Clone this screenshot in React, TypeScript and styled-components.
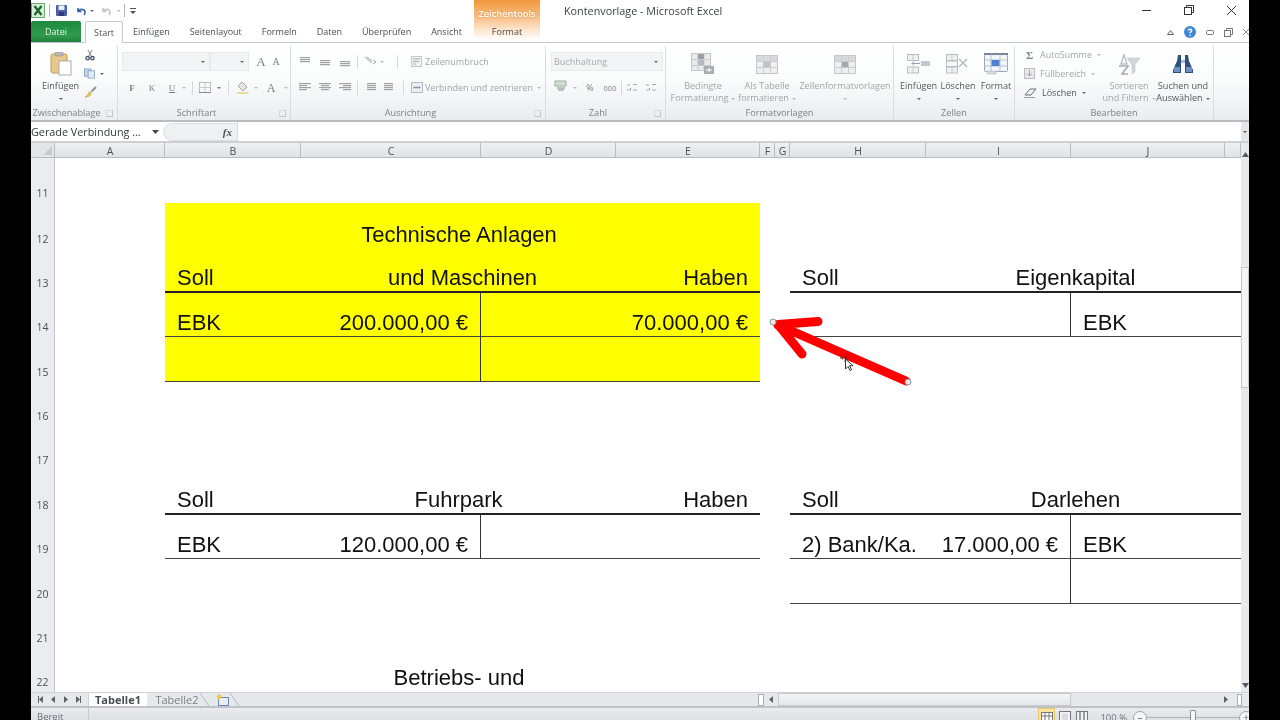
import React from "react";
import styled, { createGlobalStyle } from "styled-components";

const Global = createGlobalStyle`
  html, body { margin: 0; padding: 0; background: #000; overflow: hidden; }
  * { box-sizing: border-box; }
`;

const Screen = styled.div`
  width: 1280px; height: 720px; background: #000; display: flex; justify-content: center; overflow: hidden;
  font-family: "Open Sans", "Liberation Sans", sans-serif;
  filter: blur(0.45px);
`;
const Win = styled.div`
  width: 1218px; height: 720px; background: #fff; display: flex; flex-direction: column; overflow: hidden;
`;

/* ---------- top ---------- */
const Top = styled.div`display: flex; height: 43px; flex: none; border-bottom: 1px solid #c6c9ce;`;
const TopLeft = styled.div`width: 443px; flex: none; display: flex; flex-direction: column;`;
const Qat = styled.div`height: 20px; display: flex; align-items: center; padding-top: 1px;`;
const QatItem = styled.span<{ $ml: number }>`display: flex; align-items: center; margin-left: ${(p) => p.$ml}px;`;
const QatSep = styled.span<{ $ml: number }>`width: 1px; height: 13px; background: #aeb4bb; margin-left: ${(p) => p.$ml}px;`;
const Caret = styled.span<{ $c?: string; $ml?: number }>`
  display: inline-block; width: 0; height: 0; flex: none;
  margin-left: ${(p) => p.$ml ?? 0}px;
  border-left: 2px solid transparent; border-right: 2px solid transparent;
  border-top: 2px solid ${(p) => p.$c || "#666"};
`;
const TabRow = styled.div`height: 22px; display: flex; align-items: flex-end;`;
const FileTab = styled.div`
  width: 50px; flex: none; height: 21px; margin-right: 4px; border-radius: 2px 2px 0 0;
  background: linear-gradient(#1d8a3d, #2f9a4c 70%, #1f7f3a); color: #e6f3ea;
  font-size: 9px; display: flex; align-items: center; justify-content: center;
`;
const Tab = styled.div<{ $active?: boolean }>`
  flex: none; height: ${(p) => (p.$active ? "22px" : "21px")};
  padding: 0 ${(p) => (p.$active ? "8px" : "0")};
  margin-right: ${(p) => (p.$active ? "10px" : "20px")};
  color: #4a4f55; font-size: 9px; display: flex; align-items: center; white-space: nowrap;
  background: #fff; position: relative; top: ${(p) => (p.$active ? "1px" : "0")};
  ${(p) => p.$active && "border: 1px solid #c6c9ce; border-bottom: none; border-radius: 2px 2px 0 0;"}
`;
const Context = styled.div`
  width: 66px; flex: none; height: 40px; display: flex; flex-direction: column; align-items: center;
  background: linear-gradient(#f29a3e 0, #f7bd83 40%, #fde6cf 75%, #fff 100%);
  border-top: 1px solid #ea9a3c;
`;
const ContextTitle = styled.div`height: 24px; display: flex; align-items: center; color: #fff; font-size: 9.3px; font-weight: 600; text-shadow: 0 0 2px #d98a3a;`;
const ContextTab = styled.div`font-size: 9px; color: #4a4f55;`;
const TopRight = styled.div`flex: 1; display: flex; flex-direction: column;`;
const TitleRow = styled.div`height: 20px; display: flex; justify-content: space-between; align-items: center; padding: 0 12px 0 24px;`;
const Title = styled.div`font-size: 10.8px; color: #3c3f44; white-space: nowrap;`;
const WinButtons = styled.div`display: flex; align-items: center; gap: 32px;`;
const HelpRow = styled.div`height: 22px; display: flex; justify-content: flex-end; align-items: center; gap: 10px; padding-right: 0; padding-top: 2px;`;

/* ---------- ribbon ---------- */
const Ribbon = styled.div`
  height: 79px; flex: none; display: flex; padding-right: 35px;
  background: linear-gradient(#fff 0, #fbfcfc 45%, #e9edf0 100%);
  border-bottom: 2px solid #b9bdc2;
`;
const Group = styled.div<{ $w: number }>`
  width: ${(p) => p.$w}px; flex: none; display: flex; flex-direction: column; position: relative;
  border-right: 1px solid #d9dde1; margin-top: 3px;
`;
const GroupBody = styled.div<{ $pad?: string }>`flex: 1; display: flex; padding: ${(p) => p.$pad || "0"}; min-height: 0;`;
const GroupLabel = styled.div<{ $launcher?: boolean }>`
  height: 15px; flex: none; text-align: center; font-size: 9.2px; color: #7c8288; line-height: 15px; white-space: nowrap;
  padding-right: ${(p) => (p.$launcher ? 15 : 0)}px;
`;
const Launcher = styled.span`
  position: absolute; right: 4px; bottom: 3px; width: 7px; height: 7px;
  border: 1px solid #c3c7cc; border-top-color: #d8dbdf; border-left-color: #d8dbdf;
`;
const Stack = styled.div<{ $gap?: number; $w?: number; $mt?: number }>`
  display: flex; flex-direction: column; gap: ${(p) => p.$gap ?? 0}px;
  margin-top: ${(p) => p.$mt ?? 0}px;
  ${(p) => p.$w && `width: ${p.$w}px;`}
`;
const Line = styled.div<{ $h?: number; $gap?: number }>`
  display: flex; align-items: center; height: ${(p) => p.$h ?? 19}px; gap: ${(p) => p.$gap ?? 0}px;
`;
const Combo = styled.div<{ $w: number }>`
  width: ${(p) => p.$w}px; height: 19px; background: #f2f4f5; border: 1px solid #e7e9eb;
  display: flex; align-items: center; justify-content: flex-end; padding-right: 4px;
  font-size: 9px; color: #a7abb0;
`;
const ComboText = styled.span`flex: 1; padding-left: 2px; white-space: nowrap;`;
const Glyph = styled.span<{ $w: number; $size?: number; $serif?: boolean; $bold?: boolean; $ul?: boolean; $ml?: number }>`
  width: ${(p) => p.$w}px; text-align: center; flex: none; color: #7d8186;
  margin-left: ${(p) => p.$ml ?? 0}px;
  font-size: ${(p) => p.$size ?? 9}px; line-height: 12px;
  font-family: ${(p) => (p.$serif ? '"Liberation Serif", serif' : 'inherit')};
  font-weight: ${(p) => (p.$bold ? 700 : 400)};
  ${(p) => p.$ul && "text-decoration: underline;"}
`;
const Sep = styled.span<{ $m?: number }>`width: 1px; height: 14px; background: #d6d9dc; flex: none; margin: 0 ${(p) => p.$m ?? 3}px;`;
const MutedText = styled.span<{ $dark?: boolean; $ml?: number }>`
  font-size: 9px; white-space: nowrap; color: ${(p) => (p.$dark ? "#54585e" : "#a2a6ab")};
  margin-left: ${(p) => p.$ml ?? 0}px;
`;
const BigBtn = styled.div<{ $w: number; $dark?: boolean }>`
  width: ${(p) => p.$w}px; flex: none; display: flex; flex-direction: column; align-items: center;
  color: ${(p) => (p.$dark ? "#54585e" : "#a2a6ab")}; font-size: 9.1px; line-height: 12.5px; text-align: center; white-space: nowrap;
`;
const BigIcon = styled.div`height: 30px; display: flex; align-items: center; justify-content: center; margin-bottom: 1px;`;
const CaretLine = styled.div`height: 12px; display: flex; align-items: center; justify-content: center; gap: 3px;`;

/* ---------- formula ---------- */
const Formula = styled.div`
  height: 21px; flex: none; display: flex; align-items: stretch; background: #fff;
  border-bottom: 2px solid #ccd0d4;
`;
const NameBox = styled.div`
  width: 130px; flex: none; display: flex; align-items: center; justify-content: space-between; padding-right: 2px;
  font-size: 10.8px; color: #33373b; white-space: nowrap;
`;
const FxBox = styled.div`
  width: 74px; flex: none; margin: 1px 0 0 2px; display: flex; align-items: center; justify-content: flex-end;
  padding-right: 5px; background: #eef0f2; border-radius: 9px 0 0 9px; border: 1px solid #dcdfe3; border-right: none;
`;
const Fx = styled.span`font-family: "Liberation Serif", serif; font-style: italic; font-weight: 700; font-size: 11px; color: #4d5156;`;
const FormulaInput = styled.div`flex: 1; border-left: 1px solid #d9dce0;`;
const FormulaEnd = styled.div`width: 8px; background: #e4e7ea; display: flex; justify-content: center; align-items: center;`;

/* ---------- sheet ---------- */
const SheetWrap = styled.div`flex: 1; display: flex; min-height: 0;`;
const Sheet = styled.div`
  width: 1210px; flex: none; display: grid; position: relative; overflow: hidden;
  grid-template-columns: 24px 110px 136px 180px 135px 144px 15px 15px 136px 145px 154px 16px;
  grid-template-rows: 15px 45px 45.5px repeat(10, 44.4px);
  font-family: "Liberation Sans", Arial, sans-serif;
`;
const Corner = styled.div`
  grid-column: 1; grid-row: 1; background: #e3e6e9; border-right: 1px solid #b9bdc3; border-bottom: 1px solid #b9bdc3;
  display: flex; align-items: flex-end; justify-content: flex-end; padding: 0 2px 2px 0;
`;
const ColHead = styled.div<{ $c: number }>`
  grid-column: ${(p) => p.$c}; grid-row: 1;
  background: linear-gradient(#eef0f2, #dfe3e7); border-right: 1px solid #b9bdc3; border-bottom: 1px solid #b9bdc3;
  font-size: 10.5px; color: #4c5056; display: flex; align-items: center; justify-content: center;
  font-family: "Open Sans", sans-serif; padding: 1px 0 0 1px;
`;
const RowHead = styled.div<{ $r: number }>`
  grid-column: 1; grid-row: ${(p) => p.$r};
  background: #eaecef; border-right: 1px solid #c2c6cb;
  font-size: 10.5px; color: #4c5056; display: flex; align-items: flex-end; justify-content: center; padding-bottom: 3px;
  font-family: "Open Sans", sans-serif;
`;
const Cell = styled.div<{
  $c: number; $r: number; $span?: number; $y?: boolean;
  $align?: "left" | "right" | "center"; $b?: 0 | 1 | 2; $div?: boolean; $shift?: number; $lead?: number;
}>`
  grid-column: ${(p) => p.$c} / span ${(p) => p.$span ?? 1};
  grid-row: ${(p) => p.$r};
  background: ${(p) => (p.$y ? "#ffff00" : "transparent")};
  display: flex; align-items: flex-end; white-space: nowrap;
  justify-content: ${(p) => (p.$align === "right" ? "flex-end" : p.$align === "center" ? "center" : "flex-start")};
  padding: 0 ${(p) => 12 + (p.$shift ?? 0)}px 0 ${(p) => 12 + (p.$lead ?? 0)}px;
  font-size: 22px; line-height: 24px; color: #111;
  padding-bottom: ${(p) => (p.$b ? 1 : 2)}px;
  border-bottom: ${(p) => (p.$b === 2 ? "2px solid #222" : p.$b === 1 ? "1px solid #444" : "none")};
  border-right: ${(p) => (p.$div ? "1px solid #333" : "none")};
`;
const Overlay = styled.svg`position: absolute; left: 0; top: 0; width: 1210px; height: 549px; pointer-events: none;`;
const VScroll = styled.div`
  width: 8px; flex: none; background: #e7eaed; display: flex; flex-direction: column; align-items: center; justify-content: space-between;
  position: relative; padding: 9px 0 4px;
`;
const VThumb = styled.div`position: absolute; left: 0; top: 124px; width: 8px; height: 121px; background: #f3f5f6; border: 1px solid #c6cace;`;

/* ---------- bottom ---------- */
const TabBar = styled.div`
  height: 16px; flex: none; display: flex; align-items: stretch; background: #e6e9ec;
  border-top: 1px solid #cfd2d6; border-bottom: 2px solid #bfc3c8;
`;
const NavBox = styled.div`width: 58px; flex: none; display: flex; align-items: center; justify-content: space-around; padding: 0 4px; border-right: 1px solid #cdd1d5;`;
const SheetTab = styled.div<{ $active?: boolean; $w: number; $slant?: boolean }>`
  width: ${(p) => p.$w}px; flex: none; display: flex; align-items: center; justify-content: center; position: relative;
  font-size: 11px; color: ${(p) => (p.$active ? "#4a4d52" : "#7b8086")}; font-weight: ${(p) => (p.$active ? 700 : 400)};
  background: ${(p) => (p.$active ? "#fff" : "transparent")};
  font-family: "Open Sans", sans-serif;
  ${(p) => p.$slant && `
    &::after { content: ""; position: absolute; right: 2px; top: 0; bottom: 0; width: 1px; background: #b3b7bc; transform: skewX(35deg); }
  `}
`;
const TabSpacer = styled.div`flex: 1; display: flex; align-items: center; justify-content: flex-end;`;
const HScroll = styled.div`width: 492px; height: 100%; display: flex; align-items: center;`;
const Splitter = styled.div`width: 6px; height: 12px; flex: none; background: #fff; border: 1px solid #a9adb2; margin-left: 1px;`;
const HLeft = styled.div`width: 14px; flex: none; display: flex; justify-content: center;`;
const HThumb = styled.div`width: 293px; height: 13px; background: linear-gradient(#f3f5f6, #e4e7ea); border: 1px solid #c6cace; flex: none;`;
const HEnd = styled.div`flex: 1; display: flex; align-items: center; justify-content: flex-end; gap: 8px; padding-right: 7px;`;
const Status = styled.div`
  height: 12px; flex: none; display: flex; align-items: flex-start; justify-content: space-between;
  background: linear-gradient(#e9ebee, #dde0e4); font-size: 9.5px; color: #6b7076; overflow: hidden;
`;
const StatusText = styled.div`width: 58px; padding-left: 6px; border-right: 1px solid #c8cbd0; height: 12px; line-height: 17px;`;
const StatusRight = styled.div`display: flex; align-items: flex-start; height: 12px; margin-right: -4px;`;
const ViewBtn = styled.div<{ $on?: boolean }>`
  width: 17px; height: 12px; flex: none; display: flex; align-items: flex-start; justify-content: center; padding-top: 3px;
  ${(p) => p.$on && "background: #fbe6a5; border: 1px solid #e6c56b; border-bottom: none; margin-right: 1px;"}
`;
const Zoom = styled.span`margin: 1px 6px 0 10px; color: #70757b; font-size: 9.5px; line-height: 17px; white-space: nowrap;`;
const ZoomCircle = styled.span`
  width: 14px; height: 14px; border-radius: 50%; border: 1px solid #9ea3a9; background: #f5f6f7; flex: none; font-size: 10px; line-height: 10px; text-align: center; color: #666; margin-top: 3px;
`;
const SliderTrack = styled.div`width: 92px; height: 1px; background: #b0b4b9; margin-top: 9px; position: relative;`;
const SliderKnob = styled.span`position: absolute; left: 43px; top: -7px; width: 6px; height: 14px; background: #f6f6f6; border: 1px solid #8e9398; border-radius: 1px;`;

/* ---------- icons ---------- */
const ExcelLogo = () => (
  <svg width="14" height="15" viewBox="0 0 14 15"><rect x=".5" y=".5" width="13" height="14" fill="#d8ecd8" stroke="#6fa56f" /><path d="M3.5 3l7 9M10.5 3l-7 9" stroke="#1d6b2c" strokeWidth="2.4" /></svg>
);
const SaveIcon = () => (
  <svg width="11" height="11" viewBox="0 0 11 11"><rect width="11" height="11" rx="1" fill="#4a5fa8" /><rect x="2.5" y=".5" width="6" height="4.5" fill="#e8edf8" /><rect x="3" y="7" width="5" height="4" fill="#2d3c78" /></svg>
);
const UndoIcon = ({ c = "#3a64a8" }: { c?: string }) => (
  <svg width="11" height="10" viewBox="0 0 11 10" fill="none"><path d="M2 2v3.5h3.5" stroke={c} strokeWidth="1.6" /><path d="M2.2 5.2C4 2.6 8 2.6 9 5.5 9.4 6.8 8.8 8 8 9" stroke={c} strokeWidth="1.7" /></svg>
);
const QatMore = () => (
  <svg width="6" height="8" viewBox="0 0 6 8"><rect x="0" y="1" width="6" height="1" fill="#555" /><path d="M0 4h6L3 7z" fill="#555" /></svg>
);
const Paste = () => (
  <svg width="22" height="24" viewBox="0 0 22 24"><rect x="1" y="2" width="16" height="19" rx="2" fill="#e7c98b" stroke="#c29a55" /><rect x="5" y="0" width="8" height="4" rx="1" fill="#b7b7b7" stroke="#8d8d8d" strokeWidth=".6" /><rect x="9" y="9" width="12" height="14" fill="#fff" stroke="#a8adb3" /></svg>
);
const Scissors = () => (
  <svg width="12" height="12" viewBox="0 0 12 12" fill="none"><path d="M4 1l3.4 6.4M8 1L4.6 7.4" stroke="#7d8a96" strokeWidth="1" /><circle cx="3.6" cy="9.2" r="1.7" stroke="#44506a" strokeWidth="1.3" /><circle cx="8.4" cy="9.2" r="1.7" stroke="#44506a" strokeWidth="1.3" /></svg>
);
const CopyIcon = () => (
  <svg width="12" height="11" viewBox="0 0 12 11"><rect x=".5" y=".5" width="7" height="8" fill="#c5d6ec" stroke="#8da6c6" /><rect x="4.5" y="2.5" width="7" height="8" fill="#e4ecf6" stroke="#8da6c6" /></svg>
);
const Brush = () => (
  <svg width="13" height="13" viewBox="0 0 13 13"><path d="M7.5 5.5L12 1" stroke="#8a8f96" strokeWidth="1.8" /><path d="M1 11c2.5.5 5-1 6.6-3.4L5.6 5.3C4.8 7.6 3.2 9.8 1 11z" fill="#e8c65a" stroke="#b99a3d" strokeWidth=".6" /></svg>
);
const Lines = ({ rows }: { rows: [number, number, number][] }) => (
  <svg width="12" height="11" viewBox="0 0 12 11">{rows.map(([x, y, w], i) => <rect key={i} x={x} y={y} width={w} height="1.2" fill="#9ea2a7" />)}</svg>
);
const Borders = () => (
  <svg width="12" height="11" viewBox="0 0 12 11" fill="none"><rect x=".5" y=".5" width="11" height="10" stroke="#b9bcc0" /><path d="M.5 5.5h11M6 .5v10" stroke="#c9ccd0" /><path d="M0 10.5h12" stroke="#85898e" /></svg>
);
const Fill = () => (
  <svg width="13" height="13" viewBox="0 0 13 13"><path d="M6 1l5 5-4 4-5-5z" fill="#e3e5e8" stroke="#a3a7ac" /><rect x="1" y="11" width="11" height="2" fill="#ecdc9c" /></svg>
);
const Orient = () => (
  <svg width="13" height="11" viewBox="0 0 13 11" fill="none"><path d="M1 1l7 6M3 1l5 4" stroke="#a2a6ab" /><path d="M9 8l3-2-3-2" stroke="#a2a6ab" /></svg>
);
const Wrap = () => (
  <svg width="11" height="11" viewBox="0 0 11 11"><rect x=".5" y=".5" width="10" height="10" fill="#f0f1f2" stroke="#c4c7cb" /><path d="M2 3h7M2 5.5h6M2 8h3" stroke="#aaadb2" /></svg>
);
const Merge = () => (
  <svg width="12" height="11" viewBox="0 0 12 11"><rect x=".5" y=".5" width="11" height="10" fill="#eceef0" stroke="#b9bcc0" /><path d="M2.5 5.5h7" stroke="#8093b0" strokeWidth="1.5" /></svg>
);
const Money = () => (
  <svg width="13" height="12" viewBox="0 0 13 12"><rect x="1" y="1" width="11" height="5" fill="#cfe0cf" stroke="#a4aca4" /><path d="M3 8h8M4 10h6" stroke="#a8abb0" strokeWidth="1.4" /></svg>
);
const Decimal = () => (
  <svg width="13" height="11" viewBox="0 0 13 11" fill="none"><path d="M1 3h3M7 2.5h4M7 8h4M1 8h3" stroke="#a8abb0" strokeWidth="1.2" /><path d="M5 6l-1 1 1 1" stroke="#8aa2c2" /></svg>
);
const TableGlyph = ({ accent, w = 22, h = 19 }: { accent: string; w?: number; h?: number }) => (
  <svg width={w} height={h} viewBox="0 0 22 19" fill="none">
    <rect x=".5" y=".5" width="21" height="18" fill="#eeeff1" stroke="#c4c7cb" />
    <path d="M.5 6.5h21M.5 12.5h21M7.5.5v18M14.5.5v18" stroke="#c9ccd0" />
    <rect x="8" y="7" width="6" height="5" fill={accent} />
    <rect x="1" y="1" width="20" height="5" fill="#cdd0d4" opacity=".7" />
  </svg>
);
const CondFormat = () => (
  <svg width="24" height="22" viewBox="0 0 24 22" fill="none">
    <rect x=".5" y=".5" width="19" height="17" fill="#e9eaec" stroke="#c4c7cb" />
    <path d="M7 .5v17M13 .5v17M.5 6.5h19M.5 12.5h19" stroke="#c8cbcf" />
    <rect x="7" y="1" width="6" height="5" fill="#9a9ea3" /><rect x="7" y="7" width="6" height="5" fill="#b5b8bc" />
    <rect x="13" y="13" width="10" height="8" fill="#a9adb2" /><path d="M15 17h6M18 15v4" stroke="#fff" />
  </svg>
);
const CellIns = ({ kind }: { kind: "ins" | "del" }) => (
  <svg width="24" height="20" viewBox="0 0 24 20" fill="none">
    <rect x=".5" y=".5" width="11" height="6" fill="#eff0f2" stroke="#b9bcc0" />
    <rect x=".5" y="13" width="11" height="6" fill="#eff0f2" stroke="#b9bcc0" /><path d="M6 13v6M6 .5v6" stroke="#c5c8cc" />
    {kind === "ins" ? (<><rect x="14" y="7" width="9" height="5" fill="#c4c7cb" /><path d="M13 9.5H5M7 7.5l-2 2 2 2" stroke="#8da0b5" /></>) : (<path d="M13 5l8 8M21 5l-8 8" stroke="#b2b5ba" strokeWidth="1.2" />)}
    {kind === "del" && <rect x=".5" y="7" width="11" height="5.5" fill="#f6f6f7" stroke="#b9bcc0" />}
  </svg>
);
const FormatCell = () => (
  <svg width="24" height="22" viewBox="0 0 24 22" fill="none">
    <rect x=".5" y="1.5" width="23" height="17" rx="1" fill="#f4f6f9" stroke="#9aa5b4" />
    <rect x="0" y="0" width="24" height="2" fill="#7b8796" />
    <path d="M.5 7h23M.5 13h23M7 1.5v17M16 1.5v17" stroke="#b8c2cf" />
    <rect x="7.5" y="7" width="8" height="6" fill="#4f7fcf" />
    <rect x="3" y="18" width="9" height="3" rx="1" fill="#d8dee6" stroke="#9aa5b4" strokeWidth=".5" />
  </svg>
);
const Eraser = () => (
  <svg width="13" height="11" viewBox="0 0 13 11" fill="none"><path d="M1 8l5-6h6L7 8z" fill="#eef2f7" stroke="#67717f" /><path d="M0 10.5h11" stroke="#8da0b5" /></svg>
);
const FillDown = () => (
  <svg width="11" height="11" viewBox="0 0 11 11"><rect x=".5" y=".5" width="10" height="10" fill="#e8e9ec" stroke="#bbbec2" /><path d="M5.5 2v6M3 5.5l2.5 2.5L8 5.5" stroke="#98a1ac" fill="none" /></svg>
);
const SortIcon = () => (
  <svg width="24" height="24" viewBox="0 0 24 24"><path d="M7 12l-3 0 3-9 3 9z" fill="none" stroke="#bcbfc3" strokeWidth="1.4" /><path d="M2 14h9l-6 8h6" fill="none" stroke="#a8abaf" strokeWidth="1.6" /><path d="M10 6h13l-5 7v7l-3 2v-9z" fill="#d4d6d9" stroke="#bfc2c6" strokeWidth=".5" /></svg>
);
const Binoculars = () => (
  <svg width="22" height="20" viewBox="0 0 22 20"><path d="M6 1h3v5h4V1h3l1 6 4 9v3h-8V9H9v10H1v-3l4-9z" fill="#2f4f7f" /><rect x="2" y="13" width="6" height="5" fill="#6e90bf" /><rect x="14" y="13" width="6" height="5" fill="#6e90bf" /><rect x="9" y="6" width="4" height="3" fill="#a8bcd6" /></svg>
);
const TriUp = () => <svg width="7" height="5" viewBox="0 0 7 5"><path d="M0 5l3.5-5L7 5z" fill="#555a60" /></svg>;
const TriDown = () => <svg width="7" height="5" viewBox="0 0 7 5"><path d="M0 0l3.5 5L7 0z" fill="#555a60" /></svg>;
const Nav = ({ d, bar }: { d: "l" | "r"; bar?: boolean }) => (
  <svg width="6" height="7" viewBox="0 0 6 7">
    <path d={d === "l" ? "M5 0v7L1 3.5z" : "M1 0v7l4-3.5z"} fill="#5f6368" />
    {bar && <rect x={d === "l" ? 0 : 5} y="0" width="1" height="7" fill="#5f6368" />}
  </svg>
);
const NewSheet = () => (
  <svg width="13" height="12" viewBox="0 0 13 12"><rect x="2.5" y="3.5" width="10" height="8" fill="#e8eef7" stroke="#6d87ac" /><circle cx="3" cy="3" r="2.4" fill="#f2c94c" /></svg>
);
const ViewIcon = ({ kind }: { kind: 0 | 1 | 2 }) => (
  <svg width="12" height="10" viewBox="0 0 12 10" fill="none">
    <rect x=".5" y=".5" width="11" height="9" fill={kind === 0 ? "#fff" : "#f2f3f5"} stroke="#74797f" />
    {kind === 0 && <path d="M4 .5v9M8 .5v9M.5 4h11" stroke="#74797f" />}
    {kind === 1 && <rect x="3" y="2.5" width="6" height="7" fill="#d8dbdf" />}
    {kind === 2 && <path d="M4 .5v9M8 .5v9" stroke="#74797f" strokeWidth="1.4" />}
  </svg>
);

const colLetters: [number, string][] = [[2,"A"],[3,"B"],[4,"C"],[5,"D"],[6,"E"],[7,"F"],[8,"G"],[9,"H"],[10,"I"],[11,"J"],[12,""]];
const rowNums = [11,12,13,14,15,16,17,18,19,20,21,22];

export default function App() {
  return (
    <Screen>
      <Global />
      <Win>
        <Top>
          <TopLeft>
            <Qat>
              <ExcelLogo /><QatSep $ml={4} />
              <QatItem $ml={6}><SaveIcon /></QatItem>
              <QatItem $ml={9}><UndoIcon /></QatItem>
              <QatItem $ml={3}><Caret /></QatItem>
              <QatItem $ml={7}><UndoIcon c="#c3c7cc" /></QatItem>
              <QatItem $ml={5}><Caret $c="#bbb" /></QatItem>
              <QatSep $ml={3} />
              <QatItem $ml={5}><QatMore /></QatItem>
            </Qat>
            <TabRow>
              <FileTab>Datei</FileTab>
              <Tab $active>Start</Tab>
              <Tab>Einfügen</Tab>
              <Tab>Seitenlayout</Tab>
              <Tab>Formeln</Tab>
              <Tab>Daten</Tab>
              <Tab>Überprüfen</Tab>
              <Tab>Ansicht</Tab>
            </TabRow>
          </TopLeft>
          <Context>
            <ContextTitle>Zeichentools</ContextTitle>
            <ContextTab>Format</ContextTab>
          </Context>
          <TopRight>
            <TitleRow>
              <Title>Kontenvorlage - Microsoft Excel</Title>
              <WinButtons>
                <svg width="10" height="10" viewBox="0 0 10 10"><path d="M0 5.5h9" stroke="#333" /></svg>
                <svg width="10" height="10" viewBox="0 0 10 10" fill="none"><rect x=".5" y="2.5" width="7" height="7" stroke="#333" /><path d="M2.5 2.5v-2h7v7h-2" stroke="#333" /></svg>
                <svg width="11" height="11" viewBox="0 0 11 11"><path d="M1 1l9 9M10 1l-9 9" stroke="#333" /></svg>
              </WinButtons>
            </TitleRow>
            <HelpRow>
              <svg width="7" height="5" viewBox="0 0 7 5" fill="none"><path d="M.5 4.5l3-4 3 4z" stroke="#666" /></svg>
              <svg width="12" height="12" viewBox="0 0 12 12"><circle cx="6" cy="6" r="6" fill="#3e86d6" /><path d="M4.2 4.6C4.3 2.8 7.8 2.8 7.8 4.6 7.8 5.9 6 5.8 6 7.2" stroke="#fff" strokeWidth="1.3" fill="none" /><circle cx="6" cy="9.3" r=".8" fill="#fff" /></svg>
              <svg width="8" height="5" viewBox="0 0 8 5" fill="none"><rect x=".5" y=".5" width="7" height="4" rx="1" stroke="#777" /></svg>
              <svg width="9" height="9" viewBox="0 0 9 9" fill="none"><rect x=".5" y="2.5" width="6" height="6" stroke="#777" /><path d="M2.5 2.5v-2h6v6h-2" stroke="#777" /></svg>
              <svg width="6" height="9" viewBox="0 0 6 9" fill="none"><path d="M0 1l6 6M6 1L0 7" stroke="#888" /></svg>
            </HelpRow>
          </TopRight>
        </Top>

        <Ribbon>
          <Group $w={87}>
            <GroupBody $pad="3px 0 0 6px">
              <BigBtn $w={47} $dark>
                <BigIcon><Paste /></BigIcon>
                Einfügen
                <CaretLine><Caret /></CaretLine>
              </BigBtn>
              <Stack $gap={7} $w={20}>
                <Scissors /><Line $h={11} $gap={5}><CopyIcon /><Caret /></Line><Brush />
              </Stack>
            </GroupBody>
            <GroupLabel $launcher>Zwischenablage</GroupLabel>
            <Launcher />
          </Group>

          <Group $w={173}>
            <GroupBody $pad="6px 0 0 4px">
              <Stack $gap={7}>
                <Line>
                  <Combo $w={88}><Caret /></Combo><Combo $w={39}><Caret /></Combo>
                  <Glyph $w={18} $ml={3} $serif $size={13}>A</Glyph><Glyph $w={12} $serif $size={10}>A</Glyph>
                </Line>
                <Line>
                  <Glyph $w={20} $serif $bold>F</Glyph><Glyph $w={20} $serif>K</Glyph><Glyph $w={20} $serif $ul>U</Glyph>
                  <Caret $c="#bbb" /><Sep $m={6} /><Borders /><Caret $c="#777" $ml={6} /><Sep $m={7} /><Fill /><Caret $c="#bbb" $ml={5} />
                  <Glyph $w={26} $serif $size={12}>A</Glyph><Caret $c="#bbb" />
                </Line>
              </Stack>
            </GroupBody>
            <GroupLabel $launcher>Schriftart</GroupLabel>
            <Launcher />
          </Group>

          <Group $w={255}>
            <GroupBody $pad="6px 0 0 8px">
              <Stack $gap={7}>
                <Line $gap={8}>
                  <Lines rows={[[1,1,10],[1,3,10],[1,5,10]]} /><Lines rows={[[1,4,10],[1,6,10],[1,8,10]]} /><Lines rows={[[1,5,10],[1,7,10],[1,9,10]]} />
                  <Sep $m={-2} />
                  <Line $gap={3}><Orient /><Caret $c="#bbb" /></Line>
                  <Sep $m={5} />
                  <Line $gap={3}><Wrap /><MutedText>Zeilenumbruch</MutedText></Line>
                </Line>
                <Line $gap={8}>
                  <Lines rows={[[0,1,12],[0,3,8],[0,5,12],[0,7,8]]} /><Lines rows={[[0,1,12],[2,3,8],[0,5,12],[2,7,8]]} /><Lines rows={[[0,1,12],[4,3,8],[0,5,12],[4,7,8]]} />
                  <Sep $m={-2} /><Lines rows={[[3,1,9],[3,3,9],[3,5,9],[3,7,9]]} /><Lines rows={[[0,1,9],[0,3,9],[0,5,9],[0,7,9]]} />
                  <Sep $m={-1} />
                  <Line $gap={2}><Merge /><MutedText>Verbinden und zentrieren</MutedText><Caret $c="#bbb" $ml={2} /></Line>
                </Line>
              </Stack>
            </GroupBody>
            <GroupLabel $launcher>Ausrichtung</GroupLabel>
            <Launcher />
          </Group>

          <Group $w={120}>
            <GroupBody $pad="6px 0 0 5px">
              <Stack $gap={7}>
                <Line>
                  <Combo $w={112}><ComboText>Buchhaltung</ComboText><Caret /></Combo>
                </Line>
                <Line $gap={6}>
                  <Glyph $w={13} $ml={3}><Money /></Glyph><Caret $c="#bbb" /><Glyph $w={14}>%</Glyph><Glyph $w={14} $size={7.5}>000</Glyph>
                  <Sep $m={-2} /><Decimal /><Decimal />
                </Line>
              </Stack>
            </GroupBody>
            <GroupLabel $launcher>Zahl</GroupLabel>
            <Launcher />
          </Group>

          <Group $w={228}>
            <GroupBody $pad="3px 0 0 3px">
              <BigBtn $w={68}>
                <BigIcon><CondFormat /></BigIcon>
                Bedingte
                <CaretLine>Formatierung <Caret $c="#bbb" /></CaretLine>
              </BigBtn>
              <BigBtn $w={60}>
                <BigIcon><TableGlyph accent="#bfc2c6" /></BigIcon>
                Als Tabelle
                <CaretLine>formatieren <Caret $c="#bbb" /></CaretLine>
              </BigBtn>
              <BigBtn $w={96}>
                <BigIcon><TableGlyph accent="#a5a8ad" /></BigIcon>
                Zellenformatvorlagen
                <CaretLine><Caret $c="#bbb" /></CaretLine>
              </BigBtn>
            </GroupBody>
            <GroupLabel>Formatvorlagen</GroupLabel>
          </Group>

          <Group $w={121}>
            <GroupBody $pad="3px 0 0 4px">
              <BigBtn $w={41} $dark>
                <BigIcon><CellIns kind="ins" /></BigIcon>
                Einfügen
                <CaretLine><Caret /></CaretLine>
              </BigBtn>
              <BigBtn $w={38} $dark>
                <BigIcon><CellIns kind="del" /></BigIcon>
                Löschen
                <CaretLine><Caret /></CaretLine>
              </BigBtn>
              <BigBtn $w={38} $dark>
                <BigIcon><FormatCell /></BigIcon>
                Format
                <CaretLine><Caret /></CaretLine>
              </BigBtn>
            </GroupBody>
            <GroupLabel>Zellen</GroupLabel>
          </Group>

          <Group $w={199}>
            <GroupBody $pad="3px 0 0 9px">
              <Stack $w={77} $mt={-4}>
                <Line $h={19} $gap={5}><Glyph $w={11} $serif $bold $size={11}>Σ</Glyph><MutedText>AutoSumme</MutedText><Caret $c="#bbb" /></Line>
                <Line $h={19} $gap={5}><FillDown /><MutedText>Füllbereich</MutedText><Caret $c="#bbb" /></Line>
                <Line $h={19} $gap={5}><Eraser /><MutedText $dark>Löschen</MutedText><Caret /></Line>
              </Stack>
              <BigBtn $w={56}>
                <BigIcon><SortIcon /></BigIcon>
                Sortieren
                <CaretLine>und Filtern <Caret $c="#bbb" /></CaretLine>
              </BigBtn>
              <BigBtn $w={52} $dark>
                <BigIcon><Binoculars /></BigIcon>
                Suchen und
                <CaretLine>Auswählen <Caret /></CaretLine>
              </BigBtn>
            </GroupBody>
            <GroupLabel>Bearbeiten</GroupLabel>
          </Group>
        </Ribbon>

        <Formula>
          <NameBox>Gerade Verbindung ... <svg width="7" height="4" viewBox="0 0 7 4"><path d="M0 0h7L3.5 4z" fill="#444" /></svg></NameBox>
          <FxBox><Fx>fx</Fx></FxBox>
          <FormulaInput />
          <FormulaEnd><Caret $c="#555" /></FormulaEnd>
        </Formula>

        <SheetWrap>
          <Sheet>
            <Corner><svg width="9" height="9" viewBox="0 0 9 9"><path d="M9 0v9H0z" fill="#c7cbd0" /></svg></Corner>
            {colLetters.map(([c, l]) => <ColHead key={c} $c={c}>{l}</ColHead>)}
            {rowNums.map((n, i) => <RowHead key={n} $r={i + 2}>{n}</RowHead>)}

            <Cell $c={3} $r={3} $span={4} $y $align="center" $shift={7}>Technische Anlagen</Cell>
            <Cell $c={3} $r={4} $y $b={2}>Soll</Cell>
            <Cell $c={4} $r={4} $span={2} $y $b={2} $align="center" $lead={8}>und Maschinen</Cell>
            <Cell $c={6} $r={4} $y $b={2} $align="right">Haben</Cell>
            <Cell $c={3} $r={5} $y $b={1}>EBK</Cell>
            <Cell $c={4} $r={5} $y $b={1} $div $align="right">200.000,00 €</Cell>
            <Cell $c={5} $r={5} $y $b={1} />
            <Cell $c={6} $r={5} $y $b={1} $align="right">70.000,00 €</Cell>
            <Cell $c={3} $r={6} $span={2} $y $b={1} $div />
            <Cell $c={5} $r={6} $span={2} $y $b={1} />

            <Cell $c={9} $r={4} $b={2}>Soll</Cell>
            <Cell $c={10} $r={4} $span={2} $b={2} $align="center">Eigenkapital</Cell>
            <Cell $c={12} $r={4} $b={2} />
            <Cell $c={9} $r={5} $span={2} $b={1} $div />
            <Cell $c={11} $r={5} $span={2} $b={1}>EBK</Cell>

            <Cell $c={3} $r={9} $b={2}>Soll</Cell>
            <Cell $c={4} $r={9} $span={2} $b={2} $align="center">Fuhrpark</Cell>
            <Cell $c={6} $r={9} $b={2} $align="right">Haben</Cell>
            <Cell $c={3} $r={10} $b={1}>EBK</Cell>
            <Cell $c={4} $r={10} $b={1} $div $align="right">120.000,00 €</Cell>
            <Cell $c={5} $r={10} $span={2} $b={1} />

            <Cell $c={9} $r={9} $b={2}>Soll</Cell>
            <Cell $c={10} $r={9} $span={2} $b={2} $align="center">Darlehen</Cell>
            <Cell $c={12} $r={9} $b={2} />
            <Cell $c={9} $r={10} $b={1}>2) Bank/Ka.</Cell>
            <Cell $c={10} $r={10} $div $align="right" $b={1}>17.000,00 €</Cell>
            <Cell $c={11} $r={10} $span={2} $b={1}>EBK</Cell>
            <Cell $c={9} $r={11} $span={2} $b={1} $div />
            <Cell $c={11} $r={11} $span={2} $b={1} />

            <Cell $c={3} $r={13} $span={4} $align="center" $shift={7}>Betriebs- und</Cell>

            <Overlay viewBox="0 0 1210 549" fill="none">
              <g transform="translate(-31,-143)">
                <path d="M906 381L778 325" stroke="#ff0000" strokeWidth="9" strokeLinecap="round" />
                <path d="M818 321.5L778 324.5L802 354" stroke="#ff0000" strokeWidth="9" strokeLinecap="round" strokeLinejoin="round" />
                <path d="M774 322L790 321L800 338z" fill="#ff0000" />
                <circle cx="773" cy="322" r="3" fill="#e8ebe8" stroke="#8d9498" />
                <circle cx="908" cy="382" r="3" fill="#e8ebe8" stroke="#8d9498" />
                <path d="M846 360v-4M846 364v4M843 358h-3" stroke="#222" strokeWidth="1" />
                <circle cx="846" cy="358" r="3.5" stroke="#7a3030" strokeDasharray="1.5 1.5" />
                <path d="M845.5 359l0 10 2.5-2.5 2 4 1.6-.8-2-4 3.4 0z" fill="#fff" stroke="#222" strokeWidth=".9" />
              </g>
            </Overlay>
          </Sheet>
          <VScroll>
            <TriUp />
            <VThumb />
            <TriDown />
          </VScroll>
        </SheetWrap>

        <TabBar>
          <NavBox><Nav d="l" bar /><Nav d="l" /><Nav d="r" /><Nav d="r" bar /></NavBox>
          <SheetTab $active $w={58}>Tabelle1</SheetTab>
          <SheetTab $w={60} $slant>Tabelle2</SheetTab>
          <SheetTab $w={30} $slant><NewSheet /></SheetTab>
          <TabSpacer>
            <HScroll>
              <Splitter />
              <HLeft><Nav d="l" /></HLeft>
              <HThumb />
              <HEnd><Nav d="r" /><svg width="5" height="12" viewBox="0 0 5 12"><rect x=".5" y=".5" width="4" height="11" fill="#fff" stroke="#a9adb2" /></svg></HEnd>
            </HScroll>
          </TabSpacer>
        </TabBar>

        <Status>
          <StatusText>Bereit</StatusText>
          <StatusRight>
            <ViewBtn $on><ViewIcon kind={0} /></ViewBtn>
            <ViewBtn><ViewIcon kind={1} /></ViewBtn>
            <ViewBtn><ViewIcon kind={2} /></ViewBtn>
            <Zoom>100 %</Zoom>
            <ZoomCircle>–</ZoomCircle>
            <SliderTrack><SliderKnob /></SliderTrack>
            <ZoomCircle>+</ZoomCircle>
          </StatusRight>
        </Status>
      </Win>
    </Screen>
  );
}
